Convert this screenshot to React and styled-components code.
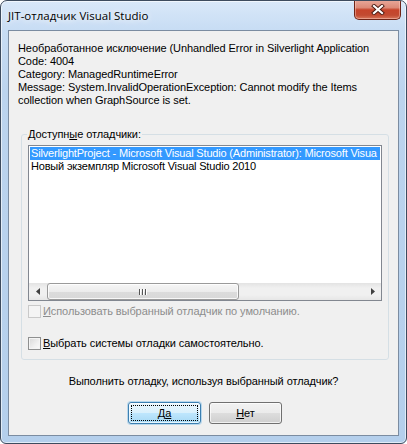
import styled, { createGlobalStyle } from 'styled-components';

const GlobalStyle = createGlobalStyle`
  html, body {
    margin: 0;
    padding: 0;
    background: #fff;
  }
  body {
    font-family: "Liberation Sans", Arial, sans-serif;
    font-size: 11px;
    letter-spacing: -0.08px;
    color: #000;
  }
`;

const Window = styled.div`
  width: 407px;
  height: 444px;
  box-sizing: border-box;
  display: flex;
  flex-direction: column;
  padding: 0 7px 7px 7px;
  border: 1px solid #3d4b5e;
  border-radius: 7px 7px 6px 6px;
  background: linear-gradient(to bottom, #d9e8f9 0, #c8ddf4 28px, #bcd4ee 90px, #b4cfec 100%);
  box-shadow: inset 0 0 0 1px rgba(255, 255, 255, 0.6);
  overflow: hidden;
`;

const TitleBar = styled.div`
  height: 29px;
  flex: none;
  display: flex;
  align-items: flex-start;
  justify-content: space-between;
`;

const Title = styled.span`
  font-family: "Open Sans", "Noto Sans", sans-serif;
  font-size: 11.5px;
  letter-spacing: 0;
  line-height: 29px;
  color: #000;
  text-shadow: 0 0 6px rgba(255, 255, 255, 0.95), 0 0 10px rgba(255, 255, 255, 0.8);
`;

const CloseButton = styled.button`
  width: 47px;
  height: 20px;
  margin: -1px -2px 0 0;
  padding: 0;
  display: flex;
  align-items: center;
  justify-content: center;
  border: 1px solid #6f2417;
  border-top: none;
  border-radius: 0 0 5px 5px;
  background: linear-gradient(to bottom, #e9a99b 0, #dc8a78 40%, #c6442b 52%, #c24a31 80%, #d8775c 100%);
  box-shadow: inset 0 0 0 1px rgba(255, 210, 200, 0.45);
`;

const Client = styled.div`
  flex: 1;
  display: flex;
  flex-direction: column;
  background: #f0f0f0;
  border: 1px solid #7b8ca1;
`;

const Message = styled.div`
  margin: 11px 0 0 9px;
  line-height: 13px;
`;

const Line = styled.div`
  white-space: nowrap;
`;

const Group = styled.fieldset`
  margin: 21px 9px 0 12px;
  padding: 0 6px 8px 6px;
  border: 1px solid #d5dfe5;
  border-radius: 3px;
  min-inline-size: 0;
`;

const Legend = styled.legend`
  padding: 0 1px;
  margin-left: -1px;
  line-height: 13px;
`;

const ListBox = styled.div`
  margin-top: 4px;
  height: 156px;
  box-sizing: border-box;
  display: flex;
  flex-direction: column;
  border: 1px solid #828790;
  background: #fff;
`;

const Rows = styled.div`
  flex: 1;
  padding: 1px;
  overflow: hidden;
`;

const Row = styled.div`
  height: 13px;
  line-height: 13px;
  padding-left: 1px;
  letter-spacing: -0.18px;
  white-space: nowrap;
  overflow: hidden;
  background: ${p => (p.$selected ? '#3399ff' : 'transparent')};
  color: ${p => (p.$selected ? '#fff' : '#000')};
`;

const ScrollBar = styled.div`
  height: 17px;
  flex: none;
  display: flex;
  align-items: stretch;
  background: linear-gradient(to bottom, #e3e3e3, #f0f0f0 30%, #f0f0f0 70%, #e6e6e6);
`;

const ArrowButton = styled.div`
  width: 17px;
  flex: none;
  display: flex;
  align-items: center;
  justify-content: center;
`;

const Track = styled.div`
  flex: 1;
  display: flex;
  align-items: stretch;
  padding: 0 1px;
`;

const Thumb = styled.div`
  width: 192px;
  box-sizing: border-box;
  display: flex;
  align-items: center;
  justify-content: center;
  gap: 1px;
  border: 1px solid #9a9a9a;
  border-radius: 3px;
  background: linear-gradient(to bottom, #f6f6f6 0, #ececec 50%, #dcdcdc 51%, #d8d8d8 100%);
  box-shadow: inset 0 0 0 1px rgba(255, 255, 255, 0.8);
`;

const Grip = styled.span`
  width: 1px;
  height: 6px;
  background: #555;
  box-shadow: 1px 0 0 #fff;
  margin-right: 1px;
`;

const CheckRow = styled.label`
  display: flex;
  align-items: center;
  gap: 2px;
  height: 16px;
  margin-top: ${p => p.$top}px;
  color: ${p => (p.$disabled ? '#8d8d8d' : '#000')};
`;

const Box = styled.span`
  width: 13px;
  height: 13px;
  flex: none;
  box-sizing: border-box;
  border: 1px solid ${p => (p.$disabled ? '#c9c9c9' : '#8e8f8f')};
  background: ${p =>
    p.$disabled
      ? '#f4f4f4'
      : 'linear-gradient(135deg, #d8d8d8 0, #f0f0f0 60%, #fbfbfb 100%)'};
  box-shadow: inset 0 0 0 1px #f4f4f4;
`;

const Question = styled.div`
  margin-top: 15px;
  line-height: 13px;
  text-align: center;
`;

const Buttons = styled.div`
  margin-top: 14px;
  display: flex;
  justify-content: center;
  gap: 8px;
  padding-left: 3px;
`;

const Button = styled.button`
  position: relative;
  width: 73px;
  height: 22px;
  padding: 0;
  font: inherit;
  color: #000;
  border: 1px solid ${p => (p.$default ? '#3c7fb1' : '#707070')};
  border-radius: 3px;
  background: ${p =>
    p.$default
      ? 'linear-gradient(to bottom, #eaf6fd 0, #d9f0fc 50%, #bee6fd 51%, #a7d9f5 100%)'
      : 'linear-gradient(to bottom, #f2f2f2 0, #ebebeb 50%, #dddddd 51%, #cfcfcf 100%)'};
  box-shadow: inset 0 0 0 1px rgba(255, 255, 255, 0.7)${p => (p.$default ? ', 0 0 0 1px rgba(80, 170, 230, 0.35)' : '')};

  &::after {
    content: '';
    display: ${p => (p.$default ? 'block' : 'none')};
    position: absolute;
    inset: 2px;
    border: 1px dotted #000;
    border-radius: 1px;
  }
`;

const CloseGlyph = () => (
  <svg width="14" height="11" viewBox="0 0 14 11">
    <path d="M3 2 L11 9 M11 2 L3 9" stroke="#4a1a12" strokeWidth="4" strokeLinecap="square" fill="none" />
    <path d="M3 2 L11 9 M11 2 L3 9" stroke="#fff" strokeWidth="2.2" strokeLinecap="square" fill="none" />
  </svg>
);

const LeftArrow = () => (
  <svg width="4" height="7" viewBox="0 0 4 7">
    <path d="M4 0 L0 3.5 L4 7 Z" fill="#404040" />
  </svg>
);

const RightArrow = () => (
  <svg width="4" height="7" viewBox="0 0 4 7">
    <path d="M0 0 L4 3.5 L0 7 Z" fill="#404040" />
  </svg>
);

const debuggers = [
  'SilverlightProject - Microsoft Visual Studio (Administrator): Microsoft Visua',
  'Новый экземпляр Microsoft Visual Studio 2010',
];

const App = () => (
  <>
    <GlobalStyle />
    <Window>
      <TitleBar>
        <Title>JIT-отладчик Visual Studio</Title>
        <CloseButton aria-label="Закрыть">
          <CloseGlyph />
        </CloseButton>
      </TitleBar>
      <Client>
        <Message>
          <Line>Необработанное исключение (Unhandled Error in Silverlight Application</Line>
          <Line>Code: 4004</Line>
          <Line>Category: ManagedRuntimeError</Line>
          <Line>Message: System.InvalidOperationException: Cannot modify the Items</Line>
          <Line>collection when GraphSource is set.</Line>
        </Message>
        <Group>
          <Legend>Доступн<u>ы</u>е отладчики:</Legend>
          <ListBox>
            <Rows>
              {debuggers.map((name, i) => (
                <Row key={name} $selected={i === 0}>{name}</Row>
              ))}
            </Rows>
            <ScrollBar>
              <ArrowButton><LeftArrow /></ArrowButton>
              <Track>
                <Thumb>
                  <Grip />
                  <Grip />
                  <Grip />
                </Thumb>
              </Track>
              <ArrowButton><RightArrow /></ArrowButton>
            </ScrollBar>
          </ListBox>
          <CheckRow $top={2} $disabled>
            <Box $disabled />
            <span><u>И</u>спользовать выбранный отладчик по умолчанию.</span>
          </CheckRow>
          <CheckRow $top={16}>
            <Box />
            <span><u>В</u>ыбрать системы отладки самостоятельно.</span>
          </CheckRow>
        </Group>
        <Question>Выполнить отладку, используя выбранный отладчик?</Question>
        <Buttons>
          <Button $default>Д<u>а</u></Button>
          <Button><u>Н</u>ет</Button>
        </Buttons>
      </Client>
    </Window>
  </>
);

export default App;
